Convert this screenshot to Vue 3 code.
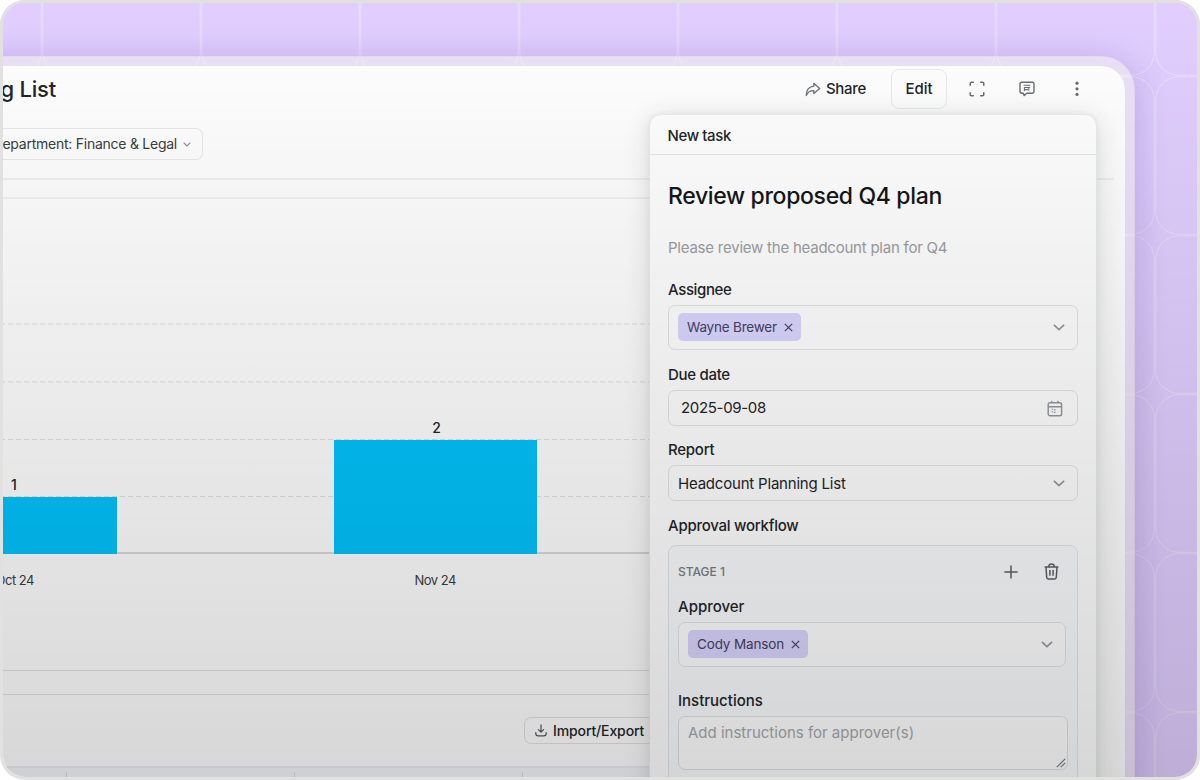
<script setup>
import { computed } from 'vue'

const STEP = 159
const tiles = computed(() => {
  const out = []
  for (let r = 0; r < 6; r++) {
    for (let c = 0; c < 9; c++) {
      out.push({ id: `${r}-${c}`, x: 42.8 - STEP + c * STEP, y: 76.8 - STEP + r * STEP })
    }
  }
  return out
})
</script>

<template>
  <div class="frame">
    <svg class="tiles" width="1200" height="780" fill="none" stroke="#fff" stroke-opacity=".34">
      <rect v-for="t in tiles" :key="t.id" :x="t.x" :y="t.y" width="157.5" height="157.5" rx="23" />
    </svg>

    <section class="window">
      <header class="bar">
        <h1 class="page-title">g List</h1>
        <nav class="actions">
          <button class="share">
            <svg width="16" height="15" viewBox="0 0 17 16" fill="none" stroke="#6f7277" stroke-width="1.4" stroke-linejoin="round">
              <path d="M9.4 1.4 15.6 6.9 9.4 12.3V9.3C5.400 9.100 3 10.800 1.300 14.400 1.300 8.900 4.300 5 9.400 4.500Z" />
            </svg>
            Share
          </button>
          <button class="edit">Edit</button>
          <svg class="act expand" width="16" height="16" viewBox="0 0 16 16" fill="none" stroke="#6a6d72" stroke-width="1.5" stroke-linecap="round">
            <path d="M1.200 4.300V2.500Q1.200 1.200 2.500 1.200H4.300M11.700 1.200H13.500Q14.800 1.200 14.800 2.500V4.300M14.800 11.700V13.500Q14.800 14.800 13.500 14.800H11.700M4.300 14.800H2.500Q1.200 14.800 1.200 13.500V11.700" />
          </svg>
          <svg class="act comment" width="16" height="16" viewBox="0 0 16 16" fill="none" stroke="#6a6d72" stroke-width="1.400" stroke-linejoin="round" stroke-linecap="round">
            <path d="M2.700 1.300H13.300Q15 1.300 15 3V10.600Q15 12.300 13.300 12.300H7.800L5.100 14.600 4.400 12.300H2.700Q1 12.300 1 10.600V3Q1 1.300 2.700 1.300Z" />
            <path d="M5 4.300H11M5.400 6.500H10.600M5.400 6.500V9.600M5.400 8.600H8.500M9.800 6.500V9.200" stroke-width="1.100" />
          </svg>
          <svg class="act more" width="4" height="16" viewBox="0 0 4 16" fill="#6a6d72">
            <circle cx="2" cy="2.200" r="1.600" /><circle cx="2" cy="7.800" r="1.600" /><circle cx="2" cy="13.400" r="1.600" />
          </svg>
        </nav>
      </header>

      <div class="filters">
        <button class="filter">
          <span>epartment: Finance &amp; Legal</span>
          <svg width="8" height="5" viewBox="0 0 8 5" fill="none" stroke="#8b8e93" stroke-width="1.100"><path d="M.6.6 4 4 7.400.6" /></svg>
        </button>
      </div>

      <div class="chart">
        <div class="plot">
          <svg class="grid" width="650" height="355">
            <g stroke="#e0e1e3" stroke-width="1.200" stroke-dasharray="5 3">
              <path d="M0 125H650M0 183H650M0 240.500H650M0 297.500H650" />
            </g>
          </svg>
          <div class="bars">
            <div class="col first"><span class="value">1</span><div class="fill one"></div></div>
            <div class="col second"><span class="value">2</span><div class="fill two"></div></div>
          </div>
        </div>
        <div class="axis">
          <span class="oct">Oct 24</span>
          <span class="nov">Nov 24</span>
        </div>
      </div>

      <div class="spacer"></div>
      <div class="tools">
        <button class="import">
          <svg width="12" height="13" viewBox="0 0 12 13" fill="none" stroke="#54575c" stroke-width="1.200" stroke-linecap="round" stroke-linejoin="round">
            <path d="M6 .8V8M3.400 5.600 6 8.200 8.600 5.600M.8 8.600V9.400Q.8 11.800 3.200 11.800H8.800Q11.200 11.800 11.200 9.400V8.600" />
          </svg>
          Import/Export
        </button>
      </div>
      <div class="thead"><i></i><i></i><i></i></div>
    </section>

    <aside class="panel">
      <header class="panel-head">New task</header>
      <div class="panel-body">
        <h2>Review proposed Q4 plan</h2>
        <p class="desc">Please review the headcount plan for Q4</p>

        <label class="l-assignee">Assignee</label>
        <div class="field tall">
          <span class="tag">Wayne Brewer
            <svg width="9" height="9" viewBox="0 0 9 9" stroke="#454166" stroke-width="1.200"><path d="M.8.8 8.200 8.200M8.200.8.8 8.200" /></svg>
          </span>
          <svg class="chev" width="12" height="7" viewBox="0 0 12 7" fill="none" stroke="#94979b" stroke-width="1.600"><path d="M.9.9 6 5.700 11.100.9" /></svg>
        </div>

        <label class="l-due">Due date</label>
        <div class="field date">
          <span>2025-09-08</span>
          <svg class="cal" width="16" height="17" viewBox="0 0 16 17" fill="none" stroke="#94979b" stroke-width="1.400">
            <rect x="1.200" y="2.700" width="13.400" height="13" rx="1.800" />
            <path d="M1.200 6.700H14.600M4.800.8V3M11 .8V3" /><path d="M4.600 9.200H6.200M7 9.900H8.500M4.600 11.800H6.200M7 12.400H8.500" stroke-width="1.100" />
          </svg>
        </div>

        <label class="l-report">Report</label>
        <div class="field report">
          <span>Headcount Planning List</span>
          <svg class="chev" width="12" height="7" viewBox="0 0 12 7" fill="none" stroke="#94979b" stroke-width="1.600"><path d="M.9.9 6 5.700 11.100.9" /></svg>
        </div>

        <label class="l-flow">Approval workflow</label>
        <div class="stage">
          <div class="stage-head">
            <span>STAGE 1</span>
            <svg class="plus" width="14" height="14" viewBox="0 0 14 14" stroke="#5c5f65" stroke-width="1.500"><path d="M7 .4V13.600M.4 7H13.600" /></svg>
            <svg class="trash" width="15" height="17" viewBox="0 0 15 17" fill="none" stroke="#5c5f65" stroke-width="1.500" stroke-linejoin="round">
              <path d="M.6 4H14.400M4.700 3.800Q4.700 1 7.500 1T10.300 3.800M2 4.200 2.700 14.300Q2.800 15.900 4.300 15.900H10.700Q12.200 15.900 12.300 14.300L13 4.200M5.900 7V12.800M9.100 7V12.800" />
            </svg>
          </div>
          <label class="l-approver">Approver</label>
          <div class="field tall approver">
            <span class="tag cody">Cody Manson
              <svg width="9" height="9" viewBox="0 0 9 9" stroke="#454166" stroke-width="1.200"><path d="M.8.8 8.200 8.200M8.200.8.8 8.200" /></svg>
            </span>
            <svg class="chev" width="12" height="7" viewBox="0 0 12 7" fill="none" stroke="#94979b" stroke-width="1.600"><path d="M.9.9 6 5.700 11.100.9" /></svg>
          </div>
          <label class="l-instr">Instructions</label>
          <div class="area">
            <span>Add instructions for approver(s)</span>
            <svg class="grip" width="10" height="10" viewBox="0 0 10 10" stroke="#77797e" stroke-width="1.200"><path d="M.8 9.200 9.200.8M4.800 9.200 9.200 4.800" /></svg>
          </div>
        </div>
      </div>
    </aside>
  </div>
</template>

<style>
body { margin: 0; background: #fff; }
</style>

<style scoped>
* { box-sizing: border-box; }
.frame {
  position: relative;
  width: 1200px;
  height: 780px;
  overflow: hidden;
  border-radius: 25px;
  background: #e1ceff;
  font: 450 15px/20px Inter, "Liberation Sans", sans-serif;
  color: #222529;
}
.frame::after {
  content: "";
  position: absolute;
  inset: 0;
  z-index: 5;
  border: 3px solid #e1e2df;
  border-radius: 25px;
  background: linear-gradient(rgba(0, 0, 0, 0) 0, rgba(0, 0, 0, .155) 100%) padding-box;
  pointer-events: none;
}
.tiles { position: absolute; inset: 0; }
svg { display: block; flex: none; }
h1, h2, p { margin: 0; }
button { font: inherit; color: inherit; background: none; border: 0; padding: 0; display: flex; align-items: center; white-space: nowrap; }

.window {
  position: absolute;
  left: -70px;
  top: 56px;
  width: 1205px;
  height: 760px;
  padding-left: 60px;
  border: 10px solid rgba(246, 243, 242, .54);
  border-radius: 34px;
  background: #fff padding-box;
  box-shadow: 0 4px 32px rgba(70, 30, 130, .2);
  display: flex;
  flex-direction: column;
}
.bar { height: 46px; flex: none; display: flex; align-items: center; justify-content: space-between; }
.page-title { width: 56px; display: flex; justify-content: flex-end; white-space: nowrap; font-size: 22px; font-weight: 550; letter-spacing: -.2px; line-height: 28px; }
.actions { display: flex; align-items: center; padding-right: 46px; }
.share { gap: 5px; font-weight: 500; letter-spacing: -.3px; }
.edit { justify-content: center; width: 56px; height: 40px; margin-left: 25px; border: 1px solid #e9eaec; border-radius: 8px; font-weight: 500; letter-spacing: -.1px; background: #fff; }
.expand { margin-left: 22px; }
.comment { margin-left: 34px; }
.more { margin-left: 40px; }

.filters { height: 66px; flex: none; padding-top: 16px; }
.filter { width: 203px; height: 32px; padding-right: 11px; justify-content: flex-end; gap: 6px; border: 1px solid #e8e9eb; border-left: 0; border-radius: 0 7px 7px 0; font-size: 14px; font-weight: 420; letter-spacing: -.25px; color: #3a3d42; }

.chart { width: 1114px; border-top: 2px solid #f1f2f3; padding-top: 17px; height: 492px; flex: none; }
.plot { display: grid; width: 650px; height: 357px; border-top: 2px solid #f1f2f3; border-bottom: 2px solid #d9dadc; }
.grid, .bars { grid-area: 1 / 1; }
.bars { display: flex; align-items: flex-end; z-index: 1; height: 355px; }
.col { display: flex; flex-direction: column; align-items: center; }
.first { width: 116.500px; margin-right: 217.500px; }
.second { width: 203px; }
.value { font-size: 14px; margin-bottom: 2px; padding-left: 2px; }
.first .value { align-self: flex-start; padding-left: 11px; }
.fill { width: 100%; background: #02c3fc; }
.one { height: 57px; }
.two { height: 114px; }
.axis { width: 650px; height: 52px; display: flex; align-items: center; font-size: 13px; font-weight: 400; letter-spacing: -.5px; color: #3a3c40; }
.oct { width: 34px; display: flex; justify-content: flex-end; white-space: nowrap; }
.nov { margin-left: 380.500px; }

.spacer { height: 25px; flex: none; border: solid #e0e1e3; border-width: 1px 0; width: 660px; }
.tools { height: 71px; flex: none; padding: 22px 0 0 524px; }
.import { width: 140px; height: 27px; padding-left: 10px; gap: 6px; border: 1px solid #e2e3e5; border-radius: 7px; font-size: 14px; font-weight: 480; letter-spacing: -.12px; }
.thead { height: 40px; width: 670px; flex: none; display: flex; background: #f5f6fb; border-top: 2px solid #eeeef2; padding: 4px 0 0 66px; gap: 227px; }
.thead i { width: 1px; height: 20px; background: #dedee5; }

.panel {
  position: absolute;
  left: 649px;
  top: 114px;
  width: 448px;
  height: 690px;
  border: 1px solid #e9ebed;
  border-radius: 12px;
  background: #fff;
  box-shadow: 0 4px 24px rgba(40, 45, 50, .16), 0 0 5px rgba(40, 45, 50, .05);
}
.panel-head { height: 40px; padding: 2px 17.500px 0; display: flex; align-items: center; border-bottom: 1px solid #e6e7e9; letter-spacing: -.38px; }
.panel-body { padding: 25px 18px 0; display: flex; flex-direction: column; }
h2 { font-size: 23px; font-weight: 540; line-height: 32px; letter-spacing: -.34px; color: #141619; }
.desc { margin-top: 26px; font-weight: 400; letter-spacing: -.23px; color: #9c9ea1; }
label { height: 20px; white-space: nowrap; }
.l-assignee { margin: 22px 0 5px; letter-spacing: -.38px; }
.l-due { margin: 15px 0 5px; letter-spacing: -.3px; }
.l-report { margin: 14px 0 5px; letter-spacing: -.25px; }
.l-flow { margin: 15px 0 9px; letter-spacing: -.25px; }
.field { width: 410px; height: 36px; border: 1px solid #e3e5e7; border-radius: 7px; display: flex; align-items: center; justify-content: space-between; padding: 0 12px 0 9px; background: rgba(255, 255, 255, .6); font-weight: 400; }
.tall { height: 45px; }
.date { padding: 0 14px 0 12px; letter-spacing: -.33px; }
.report { letter-spacing: -.2px; padding-top: 1px; }
.tag { height: 28px; margin-bottom: 1px; display: flex; align-items: center; gap: 7px; padding: 0 8px 0 9px; border-radius: 5px; background: #dbd6ff; color: #454166; font-size: 13.500px; letter-spacing: -.2px; white-space: nowrap; }
.cody { letter-spacing: -.15px; }
.stage { width: 410px; height: 260px; padding: 0 9px; border: 1px solid #e3e6e9; border-radius: 8px; background: #fafcfe; display: flex; flex-direction: column; }
.stage-head { height: 51px; display: flex; align-items: center; font-size: 12px; font-weight: 470; color: #7b7e83; }
.plus { margin-left: auto; }
.trash { margin: 0 9px 0 26px; }
.l-approver { margin-bottom: 5px; }
.approver { width: 388px; background: #fff; }
.l-instr { margin: 24px 0 5px; }
.area { width: 390px; height: 54px; display: flex; justify-content: space-between; border: 1px solid #e0e1e6; border-radius: 7px; padding: 6px 1px 0 9px; background: #fff; color: #a6a8ab; font-weight: 400; }
.grip { align-self: flex-end; margin-bottom: 1px; }
</style>
